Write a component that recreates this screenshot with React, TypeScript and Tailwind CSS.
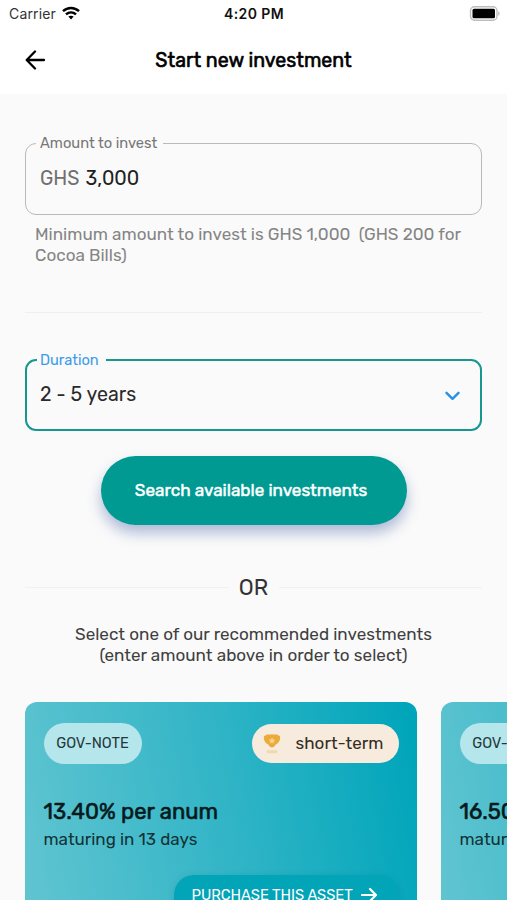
import React from 'react'

interface Investment {
    id: number
    type: string
    rate: string
    maturity: string
    term: string
}

const investments: Investment[] = [
    { id: 1, type: 'GOV-NOTE', rate: '13.40% per anum', maturity: 'maturing in 13 days', term: 'short-term' },
    { id: 2, type: 'GOV-NOTE', rate: '16.50% per anum', maturity: 'maturing in 2 years', term: 'long-term' },
]

const StatusBar: React.FC = () => (
    <div className="h-7 pl-[9px] pr-[7px] grid grid-cols-3 items-center font-['Inter',sans-serif] text-[14px]">
        <div className="flex items-center gap-[6px] text-[#333] -mt-[2px]">
            <span className="tracking-[0.15px]">Carrier</span>
            <svg className="w-[18px] h-[14px] -mt-[1px]" viewBox="0 0 18 14" fill="none" stroke="#000" strokeWidth="2.5">
                <path d="M1 5.2C5.6.9 12.4.9 17 5.2" />
                <path d="M4 8.4c3-2.7 7-2.7 10 0" />
                <path d="M6.4 10.6c1.5-1.3 3.7-1.3 5.2 0L9 13.4z" fill="#000" stroke="none" />
            </svg>
        </div>
        <span className="text-center font-semibold text-[#111] tracking-[0.38px] -ml-[1px] -mt-[2px]">4:20 PM</span>
        <svg className="justify-self-end w-[31px] h-[15px] -mt-[2px]" viewBox="0 0 31 15" fill="none">
            <rect x="1.5" y="0.8" width="26.5" height="13.4" rx="4" stroke="#bdbdbd" strokeWidth="1.4" />
            <rect x="3.5" y="2.8" width="22.5" height="9.4" rx="1.5" fill="#000" />
            <path d="M29.2 5.2c2 .8 2 3.8 0 4.6z" fill="#bdbdbd" />
        </svg>
    </div>
)

const Header: React.FC = () => (
    <div className="h-[66px] grid grid-cols-[60px_1fr_60px] items-center pb-[2px]">
        <button className="ml-[25px]">
            <svg className="w-[21px] h-[20px]" viewBox="0 0 21 20" fill="none" stroke="#000" strokeWidth="2.3" strokeLinecap="round" strokeLinejoin="round">
                <path d="M19 10H2M10 1.5L1.7 10l8.3 8.5" />
            </svg>
        </button>
        <h1 className="pt-[2px] text-center text-[19.6px] text-black [-webkit-text-stroke:0.6px_#000]">Start new investment</h1>
    </div>
)

const InvestmentCard: React.FC<{ item: Investment }> = ({ item }) => (
    <div className="w-[392px] h-[260px] shrink-0 rounded-[12px] px-[18.5px] pt-[21px] bg-linear-[80deg,#63c5d1_0%,#2fb4c6_54%,#00a5ba_98%]">
        <div className="flex items-center justify-between h-[41px]">
            <span className="w-[98px] h-[41px] rounded-full bg-[#b5e6eb] flex items-center justify-center text-[14.6px] text-[#24383b]">
                {item.type}
            </span>
            <span className="w-[147px] h-[39px] rounded-full bg-[#f6ebdc] flex items-center pl-[11px] text-[17px] text-[#332c25]">
                <svg className="w-[18px] h-[22px] mr-[15px] shrink-0" viewBox="0 0 18 22">
                    <path d="M4 1.5h10l3 1.800c.6 4-1.200 6.800-4.200 8.200C11.500 13.500 10.300 14.500 9 14.500s-2.500-1-3.800-3C2.200 10.100.4 7.300 1 3.300z" fill="#ebaa3a" />
                    <path d="M9 4.3l1 2.2 2.3.3-1.7 1.6.4 2.2-2-1-2 1 .4-2.2-1.7-1.6 2.3-.3z" fill="#f8d78f" />
                    <path d="M4 17.3h10l.5 3h-11z" fill="#f3d7ae" />
                </svg>
                <span className="tracking-[0.05px]">{item.term}</span>
            </span>
        </div>
        <p className="mt-[34px] text-[22px] leading-[28px] text-[#06191c] [-webkit-text-stroke:0.6px_#06191c] whitespace-nowrap">{item.rate}</p>
        <p className="mt-[1px] text-[17px] leading-[24px] text-[#123236] whitespace-nowrap">{item.maturity}</p>
        <button className="mt-[24px] ml-auto w-[225px] h-[48px] rounded-[20px] bg-[#02a4b8] shadow-[0_1px_7px_rgba(0,90,110,0.18)] flex items-start pt-[9px] pl-[18px] gap-[8px] text-white">
            <span className="text-[14.7px] leading-[22px] whitespace-nowrap">PURCHASE THIS ASSET</span>
            <svg className="w-[16px] h-[16px] mt-[3px]" viewBox="0 0 16 16" fill="none" stroke="#fff" strokeWidth="2.2" strokeLinecap="round" strokeLinejoin="round">
                <path d="M1 8h14M9 2l6 6-6 6" />
            </svg>
        </button>
    </div>
)

export default function App() {
    return (
        <div className="w-full h-[900px] overflow-hidden bg-[#fafafa] font-['Rubik','Roboto',sans-serif]">
            <div className="bg-white">
                <StatusBar />
                <Header />
            </div>

            {/* Form */}
            <div className="px-[25px] pt-[39px]">
                <fieldset className="h-[82px] rounded-[11px] border border-[#bababa] pl-[10px]">
                    <legend className="px-1 h-5 leading-5 text-[14.7px] text-[#777] w-[127px]">
                        <span className="whitespace-nowrap">Amount to invest</span>
                    </legend>
                    <div className="flex gap-[6px] pl-[4px] pt-[12px] text-[19.6px] leading-[28px]">
                        <span className="text-[#707070]">GHS</span>
                        <span className="text-[#222]">3,000</span>
                    </div>
                </fieldset>
                <p className="mt-[9px] pl-[10px] text-[17.1px] leading-[21px] text-[#858585] whitespace-pre">
                    {'Minimum amount to invest is GHS 1,000  (GHS 200 for\nCocoa Bills)'}
                </p>
                <div className="mt-[46px] h-px bg-[#efefef]" />

                <fieldset className="mt-[37px] h-[81px] rounded-[11px] border-2 border-[#16978f] pl-[10px]">
                    <legend className="px-[3px] h-5 leading-5 text-[14.6px] text-[#3c9cea] w-[69px]">Duration</legend>
                    <div className="flex items-center justify-between pl-[3px] pr-[20px] pt-[11px] text-[19.6px] leading-[28px] text-[#2a2a2a]">
                        <span>2 - 5 years</span>
                        <svg className="w-[15px] h-[10px] mt-[1px]" viewBox="0 0 15 10" fill="none" stroke="#2991e8" strokeWidth="2.4" strokeLinecap="round" strokeLinejoin="round">
                            <path d="M1.5 1.8l6 6 6-6" />
                        </svg>
                    </div>
                </fieldset>

                <button className="block mt-[25px] mx-auto w-[306px] h-[69px] rounded-full bg-[#009a93] text-white text-[17.1px] pr-[5px] [-webkit-text-stroke:0.5px_#fff] shadow-[0_8px_14px_rgba(60,90,160,0.4)]">
                    Search available investments
                </button>
            </div>

            <div className="mt-[47px] px-[25px] flex items-center h-[30px]">
                <div className="flex-1 h-px bg-[#f1f1f1]" />
                <span className="w-[50px] text-center text-[22px] text-[#333]">OR</span>
                <div className="flex-1 h-px bg-[#f1f1f1]" />
            </div>

            <p className="mt-[22px] text-center text-[17.1px] leading-[21px] text-[#3f3f3f]">
                Select one of our recommended investments
                <br />
                (enter amount above in order to select)
            </p>

            {/* Recommended investments */}
            <div className="mt-[36px] pl-[25px] flex gap-[24px]">
                {investments.map((item) => (
                    <InvestmentCard key={item.id} item={item} />
                ))}
            </div>
        </div>
    )
}
